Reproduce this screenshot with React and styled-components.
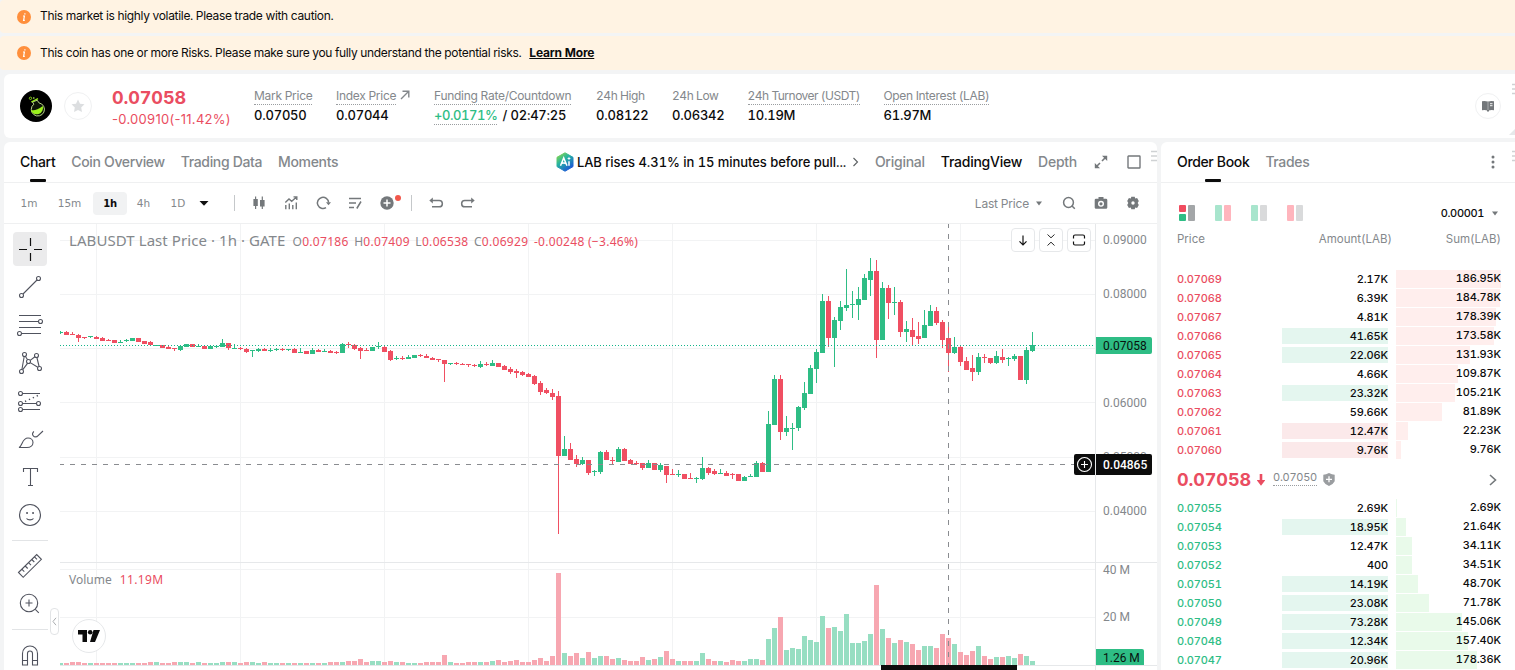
import React from "react";
import styled, { createGlobalStyle, css } from "styled-components";

const UP = "#2ebd85";
const DOWN = "#ea4d61";
const CANDLE_DOWN = "#f04f62";

// [direction, open/close top, open/close bottom, high, low, volume] on the price pane
const candles = [
  "g 332 333 331 334 2", "r 332 335 331 335 2", "r 334 335 332 335 3", "r 335 338 334 342 3", "r 337 338 337 339 2",
  "g 336 337 336 338 2", "r 337 339 336 339 2", "r 338 341 337 341 2", "r 340 341 339 341 2", "r 340 343 340 343 2",
  "g 342 343 340 343 2", "g 340 341 339 342 2", "g 338 341 338 341 2", "r 338 342 338 342 2", "r 341 344 341 344 2",
  "r 342 345 341 345 3", "g 345 346 345 346 3", "r 345 348 345 348 2", "r 347 349 346 349 2", "r 348 349 348 351 3",
  "g 346 350 346 351 3", "g 344 347 344 347 3", "r 344 347 344 347 2", "g 346 347 344 347 3", "r 346 349 346 349 2",
  "g 346 349 345 349 2", "g 346 347 345 348 2", "g 343 347 339 347 3", "r 343 348 343 350 3", "g 348 349 344 349 3",
  "r 348 349 347 350 2", "r 349 352 348 353 3", "g 350 351 350 357 3", "g 349 351 348 352 2", "r 349 351 348 351 3",
  "g 350 351 348 352 2", "g 349 350 348 351 2", "r 349 350 348 351 2", "g 349 350 349 351 2", "r 349 353 348 353 2",
  "g 352 353 348 353 2", "r 351 354 351 354 2", "g 350 354 348 354 2", "r 350 352 349 352 2", "g 351 352 349 352 2",
  "r 351 353 350 353 3", "r 352 353 351 354 3", "g 344 353 343 353 3", "r 344 345 342 348 4", "r 345 349 344 350 4",
  "r 348 351 347 359 6", "r 350 351 348 351 3", "g 347 351 347 351 4", "g 346 347 342 349 4", "r 347 352 345 352 3",
  "r 351 360 350 361 4", "g 358 359 356 360 3", "r 358 359 356 360 3", "g 357 359 355 359 2", "g 355 358 355 358 2",
  "r 355 356 354 357 2", "r 356 358 354 358 3", "r 358 360 357 360 3", "r 359 360 359 362 3", "r 360 364 360 382 10",
  "g 363 364 363 365 3", "r 363 364 362 365 2", "r 364 365 363 365 2", "r 364 365 364 367 3", "r 365 366 364 367 3",
  "g 364 367 361 368 3", "r 364 365 362 366 3", "g 363 366 360 366 4", "r 363 367 363 367 5", "r 366 370 365 370 3",
  "r 369 372 367 374 4", "r 371 373 369 378 5", "r 372 375 371 376 3", "r 374 377 373 377 3", "r 376 384 375 385 5",
  "r 383 392 381 395 7", "r 390 393 388 394 4", "r 393 397 389 400 9", "r 396 456 391 534 92", "g 449 456 436 456 12",
  "r 449 460 443 460 9", "r 459 464 455 467 12", "g 460 464 457 465 7", "r 460 473 460 475 13", "g 471 472 470 476 7",
  "g 452 472 451 474 9", "r 452 460 450 460 9", "r 460 461 457 464 6", "g 449 462 447 462 7", "r 449 461 448 461 5",
  "r 460 464 459 464 4", "r 463 464 461 465 4", "r 463 468 463 470 8", "g 463 468 460 468 5", "r 463 470 463 470 6",
  "g 465 470 463 472 8", "r 466 475 466 483 14", "r 474 475 469 475 6", "g 474 475 470 477 4", "r 474 479 474 479 4",
  "r 478 479 473 479 4", "g 478 479 477 483 4", "g 468 479 457 480 12", "r 468 473 467 475 6", "r 471 474 469 475 4",
  "g 473 474 469 474 4", "r 473 476 471 476 3", "r 474 475 473 479 5", "r 474 481 474 481 4", "g 477 481 476 481 4",
  "g 476 477 474 477 6", "g 463 477 461 477 6", "r 463 472 462 472 5", "g 424 472 411 472 26", "g 379 425 375 425 37",
  "r 379 432 375 440 48", "g 428 432 416 436 15", "g 428 429 423 450 17", "g 407 428 406 431 16", "g 393 408 382 410 29",
  "g 368 394 365 394 25", "g 352 369 349 383 23", "g 301 353 294 353 49", "r 301 338 296 347 37", "g 320 338 317 367 38",
  "g 307 321 301 330 34", "g 305 308 269 311 51", "g 304 305 291 318 22", "g 299 305 287 320 22", "g 278 300 274 300 24",
  "g 271 280 258 296 31", "r 271 340 260 358 80", "g 288 340 282 340 36", "r 288 303 285 319 27", "g 302 303 287 315 22",
  "r 302 332 300 337 25", "g 329 332 321 342 23", "r 330 337 318 345 21", "r 336 339 322 344 15", "g 325 338 310 338 19",
  "g 311 326 305 326 19", "r 311 323 307 325 17", "r 322 340 320 348 31", "r 338 353 324 372 27", "g 347 353 337 354 21",
  "r 347 362 346 366 13", "r 361 370 357 370 10", "r 368 372 355 381 14", "g 357 372 353 375 19", "r 357 358 354 363 9",
  "r 358 363 358 364 6", "g 356 363 351 364 8", "r 357 360 349 363 8", "g 358 359 357 366 9", "g 356 359 354 361 7",
  "r 356 380 356 380 11", "g 350 380 347 384 9", "g 345 351 332 352 4",
].map((row, i) => {
  const [dir, top, bottom, high, low, vol] = row.split(" ");
  return { x: 58 + i * 6, up: dir === "g", top: +top, bottom: +bottom, high: +high, low: +low, vol: +vol };
});

const asks = [
  ["0.07069", "2.17K", "186.95K"],
  ["0.07068", "6.39K", "184.78K"],
  ["0.07067", "4.81K", "178.39K"],
  ["0.07066", "41.65K", "173.58K", "up"],
  ["0.07065", "22.06K", "131.93K", "up"],
  ["0.07064", "4.66K", "109.87K"],
  ["0.07063", "23.32K", "105.21K", "up"],
  ["0.07062", "59.66K", "81.89K"],
  ["0.07061", "12.47K", "22.23K", "down"],
  ["0.07060", "9.76K", "9.76K", "down"],
];

const bids = [
  ["0.07055", "2.69K", "2.69K"],
  ["0.07054", "18.95K", "21.64K", "up"],
  ["0.07053", "12.47K", "34.11K"],
  ["0.07052", "400", "34.51K"],
  ["0.07051", "14.19K", "48.70K", "up"],
  ["0.07050", "23.08K", "71.78K", "up"],
  ["0.07049", "73.28K", "145.06K", "up"],
  ["0.07048", "12.34K", "157.40K", "up"],
  ["0.07047", "20.96K", "178.36K", "up"],
];

const stats = [
  { label: "Mark Price", value: "0.07050", width: 82, dotted: true },
  { label: "Index Price", value: "0.07044", width: 98, dotted: true, arrow: true },
  { label: "Funding Rate/Countdown", value: "funding", width: 162, dotted: true },
  { label: "24h High", value: "0.08122", width: 76, spacing: -0.45 },
  { label: "24h Low", value: "0.06342", width: 75.5, spacing: -0.45 },
  { label: "24h Turnover (USDT)", value: "10.19M", width: 136, dotted: true, spacing: -0.5 },
  { label: "Open Interest (LAB)", value: "61.97M", width: 120, dotted: true, spacing: -0.33 },
];

function InfoIcon() {
  return (
    <svg width="14" height="14" viewBox="0 0 14 14">
      <circle cx="7" cy="7" r="7" fill="#ff8f3c" />
      <path d="M7.9 3.2v1.2M6 6h1.4L6.6 10.4h1.2" fill="none" stroke="#fff" strokeWidth="1.2" />
    </svg>
  );
}

function CoinLogo() {
  return (
    <svg width="32" height="32" viewBox="0 0 32 32">
      <circle cx="16" cy="16" r="16" fill="#000" />
      <path d="M12.5 12l1.300 2.200a6.600 6.600 0 1 0 5.200-1.300l-1.800-2.700z" fill="#0d1406" stroke="#c9e79a" strokeWidth="0.900" />
      <path d="M10.800 20c3.200 1 6.700 0 12-4c1 4.200-1.700 8-5.500 8.300c-3.200.2-5.700-1.500-6.500-4.300z" fill="#9bf01c" />
      <path d="M11.300 12l6.700-3.300" stroke="#9bf01c" strokeWidth="1.300" />
      <circle cx="10.500" cy="8.300" r="1.200" fill="none" stroke="#9bf01c" strokeWidth="0.800" />
      <circle cx="13.800" cy="8" r="0.800" fill="#c9ff70" />
    </svg>
  );
}

function ToolIcon({ children, size = 28 }) {
  return (
    <svg width={size} height={size} viewBox="0 0 28 28" fill="none" stroke="#50535e" strokeWidth="1.100">
      {children}
    </svg>
  );
}

function Grip() {
  return (
    <svg width="8" height="12" viewBox="0 0 8 12" stroke="#cfd2d4" strokeWidth="1.500">
      <path d="M0 1.500h8M0 6h8M0 10.500h8" />
    </svg>
  );
}

function PriceChart() {
  return (
    <ChartSvg width="1097" height="446" viewBox="60 224 1097 446">
      <g stroke="#f2f3f4" shapeRendering="crispEdges">
        {[96, 240, 384, 528, 672, 816, 960].map((x) => (
          <path key={x} d={`M${x + 0.5} 224V665`} />
        ))}
        {[240, 294, 348, 402, 457, 511, 569, 617].map((y) => (
          <path key={y} d={`M60 ${y + 0.5}H1095`} />
        ))}
      </g>
      <g shapeRendering="crispEdges">
        {candles.map((c) => (
          <rect key={c.x} x={c.x} y={665 - c.vol} width="5" height={c.vol} fill={c.up ? "#97dec2" : "#f7a7b1"} />
        ))}
        {candles.map((c) => (
          <g key={c.x} fill={c.up ? UP : CANDLE_DOWN}>
            <rect x={c.x + 2} y={c.high} width="1" height={c.low - c.high} />
            <rect x={c.x} y={c.top} width="5" height={c.bottom - c.top} />
          </g>
        ))}
        <path d="M60 345.500H1095" stroke="#14b58a" strokeDasharray="1 2" />
        <path d="M60 562.500H1157M60 665.500H1157M1095.500 224V670" stroke="#e6e8ea" />
        <path d="M60 464.500H1074" stroke="#8a8c90" strokeDasharray="5 6" strokeDashoffset="1" />
        <path d="M948.500 224V665" stroke="#8a8c90" strokeDasharray="5 6" strokeDashoffset="1" />
        <rect x="881" y="665" width="136" height="5" fill="#0c0c0c" />
      </g>
      <AxisText x="1103" y="244">0.09000</AxisText>
      <AxisText x="1103" y="298">0.08000</AxisText>
      <AxisText x="1103" y="407">0.06000</AxisText>
      <AxisText x="1103" y="461">0.05000</AxisText>
      <AxisText x="1103" y="515">0.04000</AxisText>
      <AxisText x="1103" y="574">40 M</AxisText>
      <AxisText x="1103" y="621">20 M</AxisText>
      <path d="M1096 337h54a2 2 0 0 1 2 2v13a2 2 0 0 1-2 2h-54z" fill={UP} />
      <AxisText x="1103" y="350" $color="#07130e">0.07058</AxisText>
      <path d="M1096 454h54a2 2 0 0 1 2 2v17a2 2 0 0 1-2 2h-54zM1095 454h-19a2 2 0 0 0-2 2v17a2 2 0 0 0 2 2h19z" fill="#0c0c0c" />
      <AxisText x="1103" y="469" $color="#fff" $bold>0.04865</AxisText>
      <g fill="none" stroke="#fff" strokeWidth="1.100">
        <circle cx="1084.500" cy="464.500" r="7" />
        <path d="M1081 464.500h7M1084.500 461v7" />
      </g>
      <path d="M1096 649h46a2 2 0 0 1 2 2v14h-48z" fill={UP} />
      <AxisText x="1103" y="662" $color="#07130e">1.26 M</AxisText>
    </ChartSvg>
  );
}

function BookRow({ row, side, ratio }) {
  const [price, amount, sum, flash] = row;
  return (
    <Row>
      <Price $side={side}>{price}</Price>
      <Amount $flash={flash}>{amount}</Amount>
      <Sum>
        <Depth $side={side} style={{ width: Math.min(105, parseFloat(sum) * ratio) }} />
        <span>{sum}</span>
      </Sum>
    </Row>
  );
}

export default function App() {
  return (
    <Page>
      <GlobalStyle />
      <Banner $height={33}>
        <InfoIcon />
        <BannerText $spacing={-0.32}>This market is highly volatile. Please trade with caution.</BannerText>
      </Banner>
      <Banner $height={34}>
        <InfoIcon />
        <BannerText $spacing={-0.33}>
          This coin has one or more Risks. Please make sure you fully understand the potential risks.
        </BannerText>
        <LearnMore>Learn More</LearnMore>
      </Banner>

      <Header>
        <CoinLogo />
        <Round $size={28}>
          <svg width="14" height="14" viewBox="0 0 14 14">
            <path d="M7 .5l2 4.200 4.500.6-3.300 3.200.8 4.600L7 10.900l-4 2.200.8-4.600L.5 5.300 5 4.700z" fill="#dcdee0" />
          </svg>
        </Round>
        <LastPrice>
          <strong>0.07058</strong>
          <span>-0.00910(-11.42%)</span>
        </LastPrice>
        {stats.map((s) => (
          <Stat key={s.label} $width={s.width}>
            <StatLabel $spacing={s.spacing}>
              <Dotted $on={s.dotted}>{s.label}</Dotted>
              {s.arrow && (
                <svg width="10" height="10" viewBox="0 0 10 10" fill="none" stroke="#84888c" strokeWidth="1.400">
                  <path d="M1 9l7.500-7.500M2.500 1.200h6.300v6.300" />
                </svg>
              )}
            </StatLabel>
            {s.value === "funding" ? (
              <StatValue>
                <Funding>+0.0171%</Funding> / 02:47:25
              </StatValue>
            ) : (
              <StatValue>{s.value}</StatValue>
            )}
          </Stat>
        ))}
        <HeaderEnd>
          <Round $size={26}>
            <svg width="12" height="12" viewBox="0 0 12 12">
              <path d="M0 1.200q3-.7 5.600.3v9Q3 9.800 0 10.300zM6.400 1.500Q9 .5 12 1.200v9.100q-3-.5-5.600.3z" fill="#73777a" />
              <path d="M5 10h2v1.500H5z" fill="#73777a" />
              <path d="M5.500 1.500h1v9h-1z" fill="#73777a" />
              <path d="M8 3.700h2.500M8 5.700h2.500" stroke="#fff" strokeWidth=".9" />
            </svg>
          </Round>
        </HeaderEnd>
        <GripSpot $top={9} $right={-5}><Grip /></GripSpot>
        <Corner />
      </Header>

      <Main>
        <ChartCard>
          <TabBar>
            <Tab $active>Chart</Tab>
            <Tab>Coin Overview</Tab>
            <Tab>Trading Data</Tab>
            <Tab>Moments</Tab>
            <News>
              <svg width="18" height="20" viewBox="0 0 18 20">
                <defs>
                  <linearGradient id="hex" x1="0" y1="0" x2="0.700" y2="1">
                    <stop offset="0" stopColor="#9ade3b" />
                    <stop offset="0.450" stopColor="#27b4a0" />
                    <stop offset="1" stopColor="#1b55d8" />
                  </linearGradient>
                </defs>
                <path d="M9 .8l8 4.500v9.300l-8 4.600-8-4.600V5.300z" fill="url(#hex)" stroke="url(#hex)" strokeLinejoin="round" />
                <path d="M4.500 13.800L7.700 6l3.300 7.800M5.800 11.300c1.700-.6 3-.8 4.400.4M13 9.200v4.600" fill="none" stroke="#fff" strokeWidth="1.500" />
                <path d="M13 4.500l.6 1.400 1.400.6-1.400.6-.6 1.400-.6-1.400-1.400-.6 1.400-.6z" fill="#fff" />
              </svg>
              <span>LAB rises 4.31% in 15 minutes before pull...</span>
              <svg width="7" height="10" viewBox="0 0 7 10" fill="none" stroke="#5c6063" strokeWidth="1.100">
                <path d="M1.500 1l4 4-4 4" />
              </svg>
            </News>
            <ViewTab>Original</ViewTab>
            <ViewTab $active>TradingView</ViewTab>
            <ViewTab>Depth</ViewTab>
            <BarIcons>
              <svg width="14" height="14" viewBox="0 0 14 14" fill="none" stroke="#74787b" strokeWidth="1.600">
                <path d="M8 6l4-4M6 8l-4 4" />
                <path d="M8 .8h5.200V6zM.8 8v5.200H6z" fill="#74787b" stroke="none" />
              </svg>
              <svg width="14" height="14" viewBox="0 0 14 14" fill="none" stroke="#74787b" strokeWidth="1.400">
                <rect x="1" y="1" width="12" height="12" rx="0.500" />
              </svg>
            </BarIcons>
            <GripSpot $top={8} $right={-2}><Grip /></GripSpot>
          </TabBar>

          <Toolbar>
            <Interval $width={34}>1m</Interval>
            <Interval $width={47}>15m</Interval>
            <Interval $width={34} $active>1h</Interval>
            <Interval $width={33}>4h</Interval>
            <Interval $width={36}>1D</Interval>
            <svg width="16" height="8" viewBox="0 0 16 8"><path d="M3.500 2h9L8 6.800z" fill="#111" /></svg>
            <Divider $left={22} $right={14} />
            <IconRow>
              <svg width="20" height="20" viewBox="0 0 20 20" fill="#74787b">
                <path d="M6 3.500h1.200V6h1.600v7H7.200v3H6v-3H4.400V6H6zM12.700 3.500h1.200V7h1.700v6.500h-1.700V16h-1.200v-2.500H11V7h1.700z" />
              </svg>
              <svg width="20" height="20" viewBox="0 0 20 20" fill="none" stroke="#74787b" strokeWidth="1.400">
                <path d="M4.300 9.500L8 6l2.700 2.300L15.500 4M12.500 3.900h3.300v3.200" />
                <path d="M4.800 12v4.200M8.300 10.500v5.700M11.800 12v4.200M15.300 9.500v6.700" />
              </svg>
              <svg width="20" height="20" viewBox="0 0 20 20" fill="none" stroke="#74787b" strokeWidth="1.500">
                <path d="M13 14.600A5.600 5.600 0 1 1 15.600 9.500" />
                <path d="M13 9.300h5l-2.500 3z" fill="#74787b" stroke="none" />
              </svg>
              <svg width="20" height="20" viewBox="0 0 20 20" fill="none" stroke="#74787b" strokeWidth="1.500">
                <path d="M4 5.500h12M4 10h7M4 14.500h5M11.800 15.500l4.200-7" />
              </svg>
              <PlusWrap>
                <svg width="20" height="20" viewBox="0 0 20 20">
                  <circle cx="10" cy="10" r="6.700" fill="#74787b" />
                  <path d="M6.500 10h7M10 6.500v7" stroke="#fff" strokeWidth="1.500" />
                </svg>
                <RedDot />
              </PlusWrap>
            </IconRow>
            <Divider $left={14} $right={14} />
            <IconRow>
              <svg width="20" height="20" viewBox="0 0 20 20" fill="none" stroke="#74787b" strokeWidth="1.500">
                <path d="M5 7.500h8.200a2.900 2.900 0 0 1 0 6.300H6" />
                <path d="M3.300 7.500L6.800 4.500v6z" fill="#74787b" stroke="none" />
              </svg>
              <svg width="20" height="20" viewBox="0 0 20 20" fill="none" stroke="#74787b" strokeWidth="1.500">
                <path d="M15 7.500H6.800a2.900 2.900 0 0 0 0 6.300H14" />
                <path d="M16.700 7.500L13.200 4.500v6z" fill="#74787b" stroke="none" />
              </svg>
            </IconRow>
            <PriceType>
              Last Price
              <svg width="6" height="5" viewBox="0 0 6 5"><path d="M0 .5h6L3 4.500z" fill="#74787b" /></svg>
            </PriceType>
            <RightTools>
              <svg width="14" height="14" viewBox="0 0 14 14" fill="none" stroke="#74787b" strokeWidth="1.500">
                <circle cx="6.500" cy="6.500" r="4.900" />
                <path d="M9.800 9.800l3 3" />
              </svg>
              <svg width="14" height="14" viewBox="0 0 14 14">
                <path d="M4.500 1h5v1.800H12a1.300 1.300 0 0 1 1.300 1.300v7.400A1.300 1.300 0 0 1 12 12.800H2A1.300 1.300 0 0 1 .7 11.500V4.100A1.300 1.300 0 0 1 2 2.800h2.500z" fill="#74787b" />
                <circle cx="7" cy="7.800" r="2.300" fill="none" stroke="#fff" strokeWidth="1.400" />
              </svg>
              <svg width="14" height="14" viewBox="0 0 14 14">
                <path d="M5.300.8h3.400l.5 1.700 1.900-.4 1.700 2.800L11.700 7l1.100 2.100-1.700 2.800-1.900-.4-.5 1.700H5.300l-.5-1.700-1.900.4-1.700-2.800L2.300 7 1.200 4.900l1.700-2.800 1.900.4z" fill="#74787b" />
                <circle cx="7" cy="7" r="1.700" fill="#fff" />
              </svg>
            </RightTools>
          </Toolbar>

          <ChartBody>
            <DrawTools>
              <ToolSlot $active>
                <ToolIcon>
                  <path d="M14.500 3v8M14.500 18v8M3 14.500h8M18 14.500h8" stroke="#111" strokeWidth="1.200" />
                </ToolIcon>
              </ToolSlot>
              <ToolSlot>
                <ToolIcon>
                  <circle cx="5.500" cy="22.500" r="2" />
                  <circle cx="22.500" cy="5.500" r="2" />
                  <path d="M7 21L21 7" />
                </ToolIcon>
              </ToolSlot>
              <ToolSlot>
                <ToolIcon>
                  <path d="M3 4.500h22M3 10.500h19.500M3 16.500h22M6 22.500h19" />
                  <circle cx="24.500" cy="10.500" r="2" />
                  <circle cx="3.500" cy="22.500" r="2" />
                </ToolIcon>
              </ToolSlot>
              <ToolSlot>
                <ToolIcon>
                  <circle cx="8.500" cy="5.500" r="2" />
                  <circle cx="20.500" cy="6.500" r="2" />
                  <circle cx="12.500" cy="12.500" r="2" />
                  <circle cx="5.500" cy="22.500" r="2" />
                  <circle cx="23.500" cy="19.500" r="2" />
                  <path d="M8.200 7.500L5.900 20.500M9.300 7.300l2.300 3.500M11.500 14.300l-4.700 6.400M14.200 11.400l4.700-3.700M14.200 13.600l7.600 4.700M20.900 8.500l2.200 9" />
                </ToolIcon>
              </ToolSlot>
              <ToolSlot>
                <ToolIcon>
                  <circle cx="4.500" cy="6.500" r="2" />
                  <circle cx="4.500" cy="16.500" r="2" />
                  <circle cx="22.500" cy="16.500" r="2" />
                  <circle cx="4.500" cy="22.500" r="2" />
                  <path d="M6.500 6.500H24M6.500 16.500h14M6.500 22.500H24" />
                  <path d="M9 14.500L23 8" strokeDasharray="1.300 3" strokeWidth="1.500" />
                </ToolIcon>
              </ToolSlot>
              <ToolSlot>
                <ToolIcon>
                  <path d="M3 22.500c3.500-1.500 3-9.500 9-9.500 3 0 5 2 5 4.500 0 3-2.500 5-6 5zM27 6l-6.500 6.200M17.800 6.300q-2.300 2.500-.5 4.500t4 .3" />
                </ToolIcon>
              </ToolSlot>
              <ToolSlot>
                <ToolIcon>
                  <path d="M7.500 9V5.500h14V9M14.500 5.500v17M12 22.500h5" />
                </ToolIcon>
              </ToolSlot>
              <ToolSlot>
                <ToolIcon>
                  <circle cx="14" cy="14" r="10.500" />
                  <path d="M10.500 17.500c1.500 1.800 5.500 1.800 7 0" />
                  <path d="M10.300 12h1.500M16.300 12h1.500" strokeWidth="2" />
                </ToolIcon>
              </ToolSlot>
              <ToolRule $top={7} $bottom={8} />
              <ToolSlot>
                <ToolIcon>
                  <path d="M2.500 20.500L20.700 2.600l4.700 4.700L7.200 25.300zM5.800 17.200l2.500 2.500M9.200 14l2.500 2.500M12.500 10.700l2.500 2.500M15.800 7.500l2.500 2.500M18.500 4.800L21 7.300" />
                </ToolIcon>
              </ToolSlot>
              <ToolSlot>
                <ToolIcon>
                  <circle cx="13" cy="13" r="8.700" />
                  <path d="M9.500 13h7M13 9.500v7M19.300 19.300l3.500 3.500" />
                </ToolIcon>
              </ToolSlot>
              <ToolRule $top={7} $bottom={8} />
              <ToolSlot>
                <ToolIcon>
                  <path d="M6.500 24V12.500a7.500 7.500 0 0 1 15 0V24h-5V12.500a2.500 2.500 0 0 0-5 0V24zM6.500 19.500h5M16.500 19.500h5" />
                </ToolIcon>
              </ToolSlot>
            </DrawTools>
            <Plot>
              <PriceChart />
              <Legend>
                <b>LABUSDT Last Price · 1h · GATE</b>
                <span>O<i>0.07186</i></span>
                <span>H<i>0.07409</i></span>
                <span>L<i>0.06538</i></span>
                <span>C<i>0.06929</i></span>
                <i>-0.00248 (−3.46%)</i>
              </Legend>
              <PaneButtons>
                <PaneButton>
                  <svg width="14" height="14" viewBox="0 0 14 14"><path d="M7 2.500v9M3.500 8.300L7 11.800l3.500-3.500" /></svg>
                </PaneButton>
                <PaneButton $thin>
                  <svg width="14" height="14" viewBox="0 0 14 14"><path d="M3.500 1.500L7 4.800l3.500-3.300M3.500 12.500L7 9.200l3.500 3.300" /></svg>
                </PaneButton>
                <PaneButton>
                  <svg width="14" height="14" viewBox="0 0 14 14"><path d="M1.500 5.500V3.500q0-1.500 1.500-1.500h8q1.500 0 1.500 1.500v2M12.500 8.500v2q0 1.500-1.500 1.500H3q-1.500 0-1.500-1.500v-2" /></svg>
                </PaneButton>
              </PaneButtons>
              <VolumeLegend>Volume <i>11.19M</i></VolumeLegend>
              <TvBadge>
                <svg width="22" height="12" viewBox="0 0 22 12" fill="#0c0c0c">
                  <path d="M0 0h9v12H4.500V4.500H0zM15.500 0H22l-5 12h-5z" />
                  <circle cx="12.200" cy="2.300" r="2.300" />
                </svg>
              </TvBadge>
              <Collapse>
                <svg width="5" height="9" viewBox="0 0 5 9" fill="none" stroke="#a9acaf"><path d="M4 .8L1 4.500l3 3.700" /></svg>
              </Collapse>
            </Plot>
          </ChartBody>
        </ChartCard>

        <BookCard>
          <TabBar>
            <Tab $active>Order Book</Tab>
            <Tab>Trades</Tab>
            <MoreDots>
              <svg width="4" height="14" viewBox="0 0 4 14" fill="#74787b">
                <circle cx="2" cy="2" r="1.500" /><circle cx="2" cy="7" r="1.500" /><circle cx="2" cy="12" r="1.500" />
              </svg>
            </MoreDots>
            <GripSpot $top={8} $right={-5}><Grip /></GripSpot>
          </TabBar>
          <BookModes>
            <ModeIcon>
              <Stack><Block $color="#f04c5f" $h={7} /><Block $color={UP} $h={7} /></Stack>
              <Block $color="#a3a6a8" $h={16} />
            </ModeIcon>
            <ModeIcon><Block $color="#a8e5cd" $h={16} /><Block $color="#ffb5bd" $h={16} /></ModeIcon>
            <ModeIcon><Block $color="#a8e5cd" $h={16} /><Block $color="#d9dadb" $h={16} /></ModeIcon>
            <ModeIcon><Block $color="#ffb5bd" $h={16} /><Block $color="#d9dadb" $h={16} /></ModeIcon>
            <Precision>
              0.00001
              <svg width="6" height="5" viewBox="0 0 6 5"><path d="M0 .5h6L3 4.500z" fill="#74787b" /></svg>
            </Precision>
          </BookModes>
          <BookHead>
            <span>Price</span>
            <span>Amount(LAB)</span>
            <span>Sum(LAB)</span>
          </BookHead>
          {asks.map((row) => <BookRow key={row[0]} row={row} side="ask" ratio={0.562} />)}
          <MidPrice>
            <strong>0.07058</strong>
            <svg width="8" height="12" viewBox="0 0 8 12"><path d="M2.700 0h2.600v6H8.300L4 11.700-.3 6h3z" fill={DOWN} /></svg>
            <MarkPrice>0.07050</MarkPrice>
            <svg width="12" height="13" viewBox="0 0 12 13">
              <path d="M6 0q3 1.600 5.700 1.700v6.500Q10.500 11 6 13 1.500 11 .3 8.200V1.700Q3 1.600 6 0z" fill="#9a9da0" />
              <path d="M3 6.300h6M6 3.300v6" stroke="#fff" strokeWidth="1.300" />
            </svg>
            <MidArrow>
              <svg width="8" height="12" viewBox="0 0 8 12" fill="none" stroke="#74787b" strokeWidth="1.600"><path d="M1 1l5.500 5L1 11" /></svg>
            </MidArrow>
          </MidPrice>
          {bids.map((row) => <BookRow key={row[0]} row={row} side="bid" ratio={0.455} />)}
        </BookCard>
      </Main>
    </Page>
  );
}

const GlobalStyle = createGlobalStyle`
  * {
    box-sizing: border-box;
  }

  body {
    margin: 0;
    overflow: hidden;
    background: #f3f4f5;
    color: #0c0c0c;
    font-family: Inter, "Liberation Sans", sans-serif;
    font-variant-numeric: tabular-nums;
  }

  svg {
    display: block;
    flex: none;
  }

  i {
    font-style: normal;
  }
`;

const Page = styled.div`
  height: 670px;
  display: flex;
  flex-direction: column;
  overflow: hidden;
`;

const Banner = styled.div`
  height: ${(p) => p.$height}px;
  flex: none;
  display: flex;
  align-items: center;
  padding-left: 17px;
  margin-bottom: ${(p) => (p.$height === 33 ? 3 : 4)}px;
  border-radius: 4px 0 0 4px;
  background: #fff3e3;
  font-size: 12px;
`;

const BannerText = styled.span`
  margin-left: 9px;
  padding-bottom: 2px;
  letter-spacing: ${(p) => p.$spacing}px;
`;

const LearnMore = styled.a`
  margin-left: 8px;
  padding-bottom: 2px;
  font-weight: 700;
  letter-spacing: -0.2px;
  text-decoration: underline;
`;

const Header = styled.header`
  position: relative;
  height: 64px;
  flex: none;
  display: flex;
  align-items: center;
  margin: 0 0 4px 4px;
  padding-left: 16px;
  border-radius: 6px 0 0 6px;
  background: #fff;
`;

const Round = styled.div`
  width: ${(p) => p.$size}px;
  height: ${(p) => p.$size}px;
  flex: none;
  display: flex;
  align-items: center;
  justify-content: center;
  border: 1px solid #f0f1f2;
  border-radius: 50%;

  ${Header} > & {
    margin-left: 12px;
  }
`;

const LastPrice = styled.div`
  width: 142px;
  margin-left: 20px;
  padding-top: 4px;
  display: flex;
  flex-direction: column;
  color: ${DOWN};

  strong {
    font-size: 18px;
    font-weight: 700;
    line-height: 22px;
    letter-spacing: -0.1px;
  }

  span {
    font-size: 13px;
    line-height: 20px;
    letter-spacing: 0.28px;
    font-variant-numeric: normal;
  }
`;

const Stat = styled.div`
  width: ${(p) => p.$width}px;
  flex: none;
  padding-top: 1px;
  white-space: nowrap;
`;

const StatLabel = styled.div`
  height: 18px;
  display: flex;
  gap: 4px;
  color: #84888c;
  font-size: 12px;
  line-height: 16px;
  letter-spacing: ${(p) => p.$spacing || -0.28}px;

  svg {
    margin-top: 2px;
  }
`;

const Dotted = styled.span`
  height: 17px;
  ${(p) => p.$on && css`
    border-bottom: 1px dotted #9a9da0;
  `}
`;

const StatValue = styled.div`
  font-size: 13px;
  font-weight: 500;
  line-height: 19px;
  letter-spacing: -0.22px;
`;

const Funding = styled.span`
  display: inline-block;
  height: 19px;
  margin-right: 2px;
  border-bottom: 1px dotted #9a9da0;
  color: ${UP};
  letter-spacing: -0.45px;
  vertical-align: top;
`;

const HeaderEnd = styled.div`
  margin-left: auto;
  padding-right: 14px;
`;

const GripSpot = styled.div`
  position: absolute;
  top: ${(p) => p.$top}px;
  right: ${(p) => p.$right}px;
`;

// resize handle in the lower right corner of the header
const Corner = styled.div`
  position: absolute;
  right: 0;
  bottom: 3px;
  border: 3px solid transparent;
  border-right-color: #e6e8ea;
  border-bottom-color: #e6e8ea;
`;

const Main = styled.main`
  flex: 1;
  min-height: 0;
  display: grid;
  grid-template-columns: 1153px 1fr;
  gap: 4px;
  padding-left: 4px;
`;

const Card = styled.section`
  min-width: 0;
  min-height: 0;
  overflow: hidden;
  border-radius: 6px 6px 0 0;
  background: #fff;
`;

const ChartCard = styled(Card)``;

const BookCard = styled(Card)`
  border-radius: 6px 0 0 0;
`;

const TabBar = styled.div`
  position: relative;
  height: 41px;
  display: flex;
  align-items: center;
  padding-left: 16px;
  border-bottom: 1px solid #eff0f1;
`;

const Tab = styled.div`
  position: relative;
  height: 100%;
  margin-right: 16px;
  color: ${(p) => (p.$active ? "#0c0c0c" : "#84888c")};
  font-size: 14px;
  font-weight: 500;
  line-height: 40px;
  letter-spacing: -0.35px;

  ${(p) => p.$active && css`
    &::after {
      content: "";
      position: absolute;
      left: 50%;
      bottom: 0;
      width: 16px;
      height: 3px;
      margin-left: -8px;
      border-radius: 1px;
      background: #0c0c0c;
    }
  `}
`;

const News = styled.div`
  width: 303px;
  margin-left: auto;
  display: flex;
  align-items: center;
  font-size: 13px;
  font-weight: 500;
  letter-spacing: -0.06px;
  white-space: nowrap;

  span {
    width: 271px;
    margin: 0 4px 0 3px;
  }
`;

const ViewTab = styled.div`
  margin-left: 16px;
  padding-bottom: 1px;
  color: ${(p) => (p.$active ? "#0c0c0c" : "#84888c")};
  font-size: 14px;
  font-weight: 500;
  letter-spacing: -0.25px;
`;

const BarIcons = styled.div`
  display: flex;
  gap: 19px;
  margin: 0 16px 0 17px;
`;

const Toolbar = styled.div`
  height: 41px;
  display: flex;
  align-items: center;
  padding-left: 8px;
  border-bottom: 1px solid #eff0f1;
`;

const Interval = styled.div`
  width: ${(p) => p.$width}px;
  height: 23px;
  border-radius: 4px;
  background: ${(p) => (p.$active ? "#f1f2f3" : "none")};
  color: ${(p) => (p.$active ? "#0c0c0c" : "#84888c")};
  font-family: "DejaVu Sans", sans-serif;
  font-size: ${(p) => (p.$active ? 10 : 10.5)}px;
  font-weight: ${(p) => (p.$active ? 700 : 400)};
  line-height: 23px;
  letter-spacing: ${(p) => (p.$active ? -0.4 : 0)}px;
  text-align: center;
`;

const Divider = styled.div`
  width: 1px;
  height: 16px;
  margin: 0 ${(p) => p.$right}px 0 ${(p) => p.$left}px;
  background: #c5c8ca;
`;

const IconRow = styled.div`
  display: flex;
  gap: 12px;
`;

const PlusWrap = styled.div`
  position: relative;
`;

const RedDot = styled.div`
  position: absolute;
  top: 2px;
  right: -4px;
  width: 6px;
  height: 6px;
  border-radius: 50%;
  background: #f2574b;
`;

const PriceType = styled.div`
  margin-left: auto;
  display: flex;
  align-items: center;
  gap: 7px;
  color: #84888c;
  font-size: 12px;
  letter-spacing: -0.2px;
`;

const RightTools = styled.div`
  display: flex;
  gap: 18px;
  margin: 0 17px 0 20px;
`;

const ChartBody = styled.div`
  display: flex;
  height: 446px;
`;

const DrawTools = styled.div`
  width: 56px;
  flex: none;
  display: flex;
  flex-direction: column;
  align-items: center;
  padding: 8px 4px 0 0;
`;

const ToolSlot = styled.div`
  width: 34px;
  height: 34px;
  flex: none;
  margin-bottom: 4px;
  display: flex;
  align-items: center;
  justify-content: center;
  border-radius: 4px;
  background: ${(p) => (p.$active ? "#ebebec" : "none")};
`;

const ToolRule = styled.div`
  width: 36px;
  height: 1px;
  flex: none;
  margin: ${(p) => p.$top - 3}px 0 ${(p) => p.$bottom}px;
  background: #e2e4e6;
`;

const Plot = styled.div`
  position: relative;
`;

const ChartSvg = styled.svg`
  overflow: hidden;
`;

const AxisText = styled.text`
  fill: ${(p) => p.$color || "#84888c"};
  font-family: Roboto, sans-serif;
  font-size: 12px;
  font-weight: ${(p) => (p.$bold ? 500 : 400)};
`;

const Legend = styled.div`
  position: absolute;
  top: 6px;
  left: 9px;
  display: flex;
  align-items: baseline;
  gap: 5.5px;
  color: #84888c;
  font-family: "Noto Sans", sans-serif;
  font-size: 12px;
  letter-spacing: 0.3px;
  white-space: nowrap;

  b {
    margin-right: 1.5px;
    font-size: 15px;
    font-weight: 400;
    letter-spacing: 0.07px;
  }

  i {
    color: ${DOWN};
  }
`;

const PaneButtons = styled.div`
  position: absolute;
  top: 4px;
  left: 951px;
  display: flex;
  gap: 4px;
`;

const PaneButton = styled.div`
  width: 24px;
  height: 24px;
  display: flex;
  align-items: center;
  justify-content: center;
  border: 1px solid #e6e8ea;
  border-radius: 4px;
  background: #fff;

  svg {
    fill: none;
    stroke: #111;
    stroke-width: ${(p) => (p.$thin ? 0.9 : 1.2)};
  }
`;

const VolumeLegend = styled.div`
  position: absolute;
  top: 347px;
  left: 9px;
  color: #84888c;
  font-family: "Noto Sans", sans-serif;
  font-size: 12px;

  i {
    margin-left: 5px;
    color: ${DOWN};
    letter-spacing: 0.35px;
  }
`;

const TvBadge = styled.div`
  position: absolute;
  top: 395px;
  left: 12px;
  width: 34px;
  height: 34px;
  display: flex;
  align-items: center;
  justify-content: center;
  border: 1px solid #e6e8ea;
  border-radius: 50%;
  background: #fff;
`;

const Collapse = styled.div`
  position: absolute;
  top: 384px;
  left: -10px;
  width: 9px;
  height: 27px;
  display: flex;
  align-items: center;
  justify-content: center;
  border: 1px solid #e2e4e6;
  border-radius: 4px;
  background: #fff;
`;

const MoreDots = styled.div`
  margin: 0 20px 0 auto;
`;

const BookModes = styled.div`
  height: 46px;
  display: flex;
  align-items: flex-end;
  gap: 20px;
  padding: 0 17px 8px 18px;
`;

const ModeIcon = styled.div`
  display: flex;
  gap: 2px;
`;

const Stack = styled.div`
  display: flex;
  flex-direction: column;
  gap: 2px;
`;

const Block = styled.div`
  width: 7px;
  height: ${(p) => p.$h}px;
  border-radius: 1px;
  background: ${(p) => p.$color};
`;

const Precision = styled.div`
  height: 16px;
  margin-left: auto;
  display: flex;
  align-items: center;
  gap: 8px;
  font-size: 11px;
  font-weight: 500;
  letter-spacing: -0.35px;
`;

const columns = css`
  display: grid;
  grid-template-columns: 105px 106px 105px;
  padding-left: 16px;
`;

const BookHead = styled.div`
  ${columns}
  height: 41px;
  padding-top: 3px;
  color: #84888c;
  font-size: 11.5px;
  line-height: 14px;

  span:nth-child(2) {
    margin-right: -4px;
    text-align: right;
  }

  span:nth-child(3) {
    margin-right: -8px;
    text-align: right;
  }
`;

const Row = styled.div`
  ${columns}
  height: 19px;
  grid-template-columns: 105px 106px 8px 105px;
  font-size: 11px;
  font-weight: 500;
  letter-spacing: -0.12px;
`;

const Price = styled.div`
  color: ${(p) => (p.$side === "ask" ? DOWN : UP)};
  line-height: 18px;
`;

const Amount = styled.div`
  height: 16px;
  margin-top: 1px;
  background: ${(p) => (p.$flash === "up" ? "#e4f6ef" : p.$flash === "down" ? "#fbe9ea" : "none")};
  line-height: 16px;
  text-align: right;
`;

const Sum = styled.div`
  position: relative;
  grid-column: 4;
  height: 18px;
  line-height: 16px;
  text-align: right;

  span {
    position: relative;
  }
`;

const Depth = styled.div`
  position: absolute;
  top: 0;
  left: 0;
  height: 18px;
  background: ${(p) => (p.$side === "ask" ? "#ffeeed" : "#e9faea")};
`;

const MidPrice = styled.div`
  height: 39px;
  display: flex;
  align-items: center;
  padding-left: 16px;

  strong {
    width: 80px;
    color: ${DOWN};
    font-size: 18px;
    font-weight: 700;
    letter-spacing: -0.1px;
  }
`;

const MarkPrice = styled.span`
  margin: 0 6px 3px 8px;
  border-bottom: 1px dotted #9a9da0;
  color: #84888c;
  font-size: 11px;
  line-height: 15px;
  letter-spacing: -0.25px;
`;

const MidArrow = styled.div`
  margin: 0 18px 0 auto;
`;
